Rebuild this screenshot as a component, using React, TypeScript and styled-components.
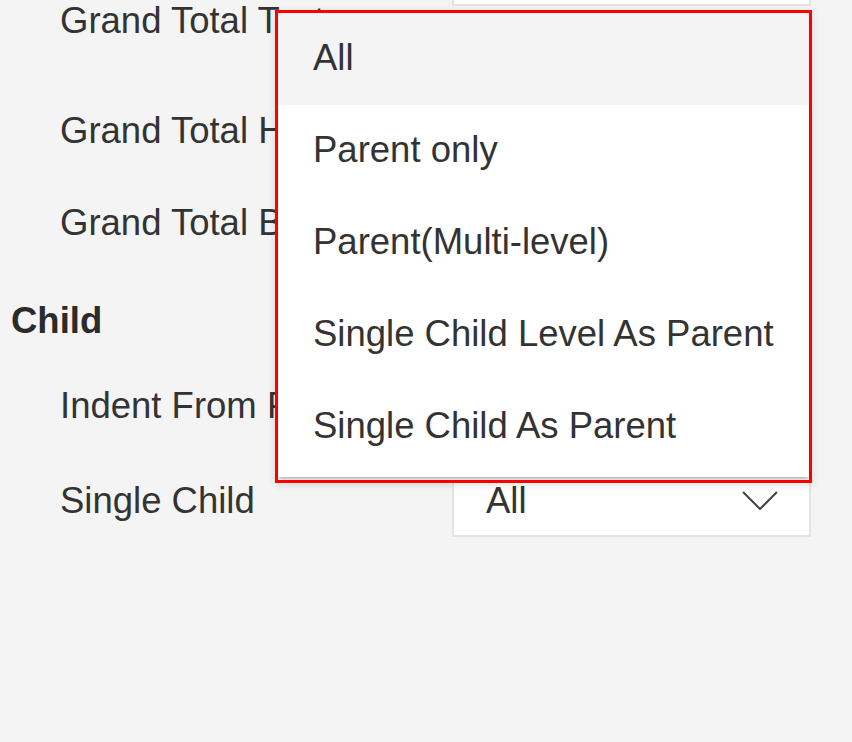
import styled, { createGlobalStyle } from "styled-components";

const GlobalStyle = createGlobalStyle`
  html, body {
    margin: 0;
    padding: 0;
    background: #f4f4f4;
  }
  * {
    box-sizing: border-box;
  }
`;

const Page = styled.div`
  position: relative;
  height: 742px;
  overflow: hidden;
  background: #f4f4f4;
  font-family: "Liberation Sans", Arial, Helvetica, sans-serif;
  color: #333;
`;

const SettingsList = styled.div`
  display: flex;
  flex-direction: column;
  margin-top: -66px;
`;

const Row = styled.div<{ $h?: number; $mt?: number }>`
  display: flex;
  align-items: center;
  height: ${(p) => p.$h ?? 72}px;
  margin-top: ${(p) => p.$mt ?? 0}px;
`;

const Label = styled.div`
  width: 452px;
  padding-left: 60px;
  font-size: 36.5px;
  line-height: 40px;
  white-space: nowrap;
  overflow: hidden;
`;

const SectionTitle = styled.div`
  padding-left: 11px;
  font-size: 36.5px;
  line-height: 40px;
  font-weight: 700;
  color: #2b2b2b;
`;

const Select = styled.div`
  width: 359px;
  height: 72px;
  display: flex;
  align-items: center;
  justify-content: space-between;
  padding: 0 31px 0 32px;
  background: #fff;
  border: 2px solid #e3e3e3;
  font-size: 36.5px;
  line-height: 40px;
  color: #333;
`;

const Switch = styled.div`
  width: 40px;
  height: 18px;
  border-radius: 9px;
  background: #ccc;
`;

const NumberInput = styled.div`
  width: 120px;
  height: 40px;
  background: #fff;
  border: 2px solid #e3e3e3;
`;

const MenuOutline = styled.div`
  position: absolute;
  top: 10px;
  left: 275px;
  width: 537px;
  border: 3px solid #ff0000;
  padding-bottom: 3px;
  background: #fff;
  box-shadow: 0 2px 8px rgba(0, 0, 0, 0.12);
`;

const Menu = styled.ul`
  margin: 0;
  padding: 0 0 4px;
  list-style: none;
  background: #fff;
  box-shadow: 0 3px 3px -1px rgba(0, 0, 0, 0.3);
`;

const MenuItem = styled.li<{ $active?: boolean }>`
  height: 92px;
  display: flex;
  align-items: center;
  padding: 0 0 3px 35px;
  font-size: 36.5px;
  line-height: 40px;
  color: #333;
  background: ${(p) => (p.$active ? "#f4f4f4" : "#fff")};
  white-space: nowrap;
`;

const Chevron = () => (
  <svg width="36" height="19" viewBox="0 0 36 19" fill="none">
    <path d="M1 1 L18 18 L35 1" stroke="#444" strokeWidth="2" />
  </svg>
);

const options = [
  "All",
  "Parent only",
  "Parent(Multi-level)",
  "Single Child Level As Parent",
  "Single Child As Parent",
];

export default function App() {
  return (
    <Page>
      <GlobalStyle />
      <SettingsList>
        <Row>
          <Label />
          <Select />
        </Row>
        <Row $h={29}>
          <Label>Grand Total Text</Label>
          <Switch />
        </Row>
        <Row $mt={59.5}>
          <Label>Grand Total Highlight</Label>
          <Switch />
        </Row>
        <Row $mt={20}>
          <Label>Grand Total Bold</Label>
          <Switch />
        </Row>
        <Row $mt={26}>
          <SectionTitle>Child</SectionTitle>
        </Row>
        <Row $mt={13}>
          <Label>Indent From Parent</Label>
          <NumberInput />
        </Row>
        <Row $mt={23}>
          <Label>Single Child</Label>
          <Select>
            All
            <Chevron />
          </Select>
        </Row>
      </SettingsList>

      <MenuOutline>
        <Menu>
          {options.map((opt, i) => (
            <MenuItem key={opt} $active={i === 0}>
              {opt}
            </MenuItem>
          ))}
        </Menu>
      </MenuOutline>
    </Page>
  );
}
